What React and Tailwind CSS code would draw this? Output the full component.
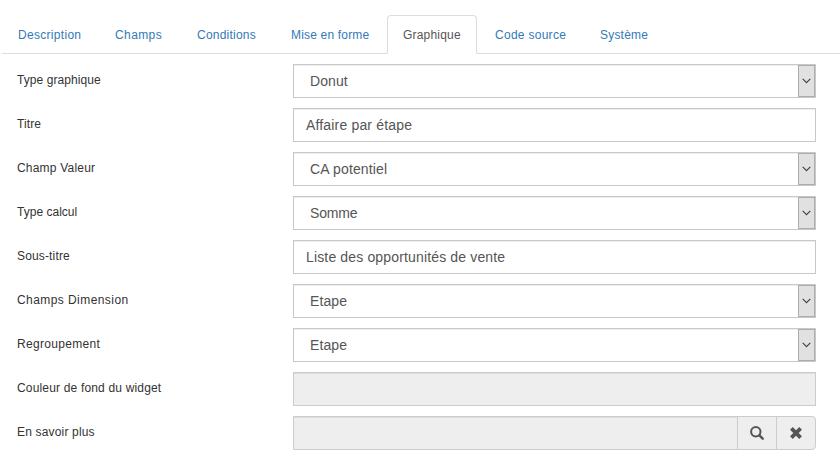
const tabs = [
  ['Description', 'w-[97px] tracking-[0.3px]'],
  ['Champs', 'w-[82px] tracking-[0.4px]'],
  ['Conditions', 'w-[94px] tracking-[0.22px]'],
  ['Mise en forme', 'w-[112px] tracking-[0.18px]'],
  ['Graphique', 'mr-[2px] w-[90px] tracking-[0.2px]'],
  ['Code source', 'w-[105px] tracking-[0.28px]'],
  ['Système', 'w-[82px] tracking-[0.2px]'],
];

const fields = [
  { label: 'Type graphique', spacing: 'tracking-[0.07px]', type: 'select', value: 'Donut', valueSpacing: 'tracking-[0.1px]' },
  { label: 'Titre', spacing: 'tracking-[0.1px]', type: 'text', value: 'Affaire par étape', valueSpacing: 'tracking-[0.17px]' },
  { label: 'Champ Valeur', spacing: 'tracking-[0.2px]', type: 'select', value: 'CA potentiel', valueSpacing: 'tracking-[0.15px]' },
  { label: 'Type calcul', spacing: 'tracking-[0.02px]', type: 'select', value: 'Somme', valueSpacing: 'tracking-[-0.2px]' },
  { label: 'Sous-titre', spacing: 'tracking-[0.15px]', type: 'text', value: 'Liste des opportunités de vente', valueSpacing: 'tracking-[0.15px]' },
  { label: 'Champs Dimension', spacing: 'tracking-[0.43px]', type: 'select', value: 'Etape', valueSpacing: 'tracking-[0.1px]' },
  { label: 'Regroupement', spacing: 'tracking-[0.32px]', type: 'select', value: 'Etape', valueSpacing: 'tracking-[0.1px]' },
  { label: 'Couleur de fond du widget', spacing: 'tracking-[0.17px]', type: 'disabled' },
  { label: 'En savoir plus', spacing: 'tracking-[0.17px]', type: 'lookup' },
];

function Select({ value, spacing }) {
  return (
    <div className="flex h-[34px] w-[523px] border border-[#c8c8c8] bg-white pl-4 text-[14px] leading-[32px] text-[#555] shadow-[inset_0_1px_1px_rgba(0,0,0,0.075)]">
      <span className={`grow ${spacing}`}>{value}</span>
      <span className="flex w-[17px] items-center justify-center border border-[#adadad] bg-[#e1e1e1]">
        <svg width="9" height="6" viewBox="0 0 9 6" fill="none" stroke="#444" strokeWidth="1.2">
          <path d="M0.7 0.9 4.5 4.7 8.3 0.9" />
        </svg>
      </span>
    </div>
  );
}

function Lookup() {
  return (
    <div className="flex h-[34px] w-[523px] rounded-r border border-[#ccc] bg-[#eee]">
      <span className="grow shadow-[inset_0_1px_1px_rgba(0,0,0,0.075)]" />
      <span className="flex w-[39px] items-center justify-center border-l border-[#ccc]">
        <svg width="14" height="14" viewBox="0 0 14 14" fill="none" stroke="#555" strokeWidth="2">
          <circle cx="5.8" cy="5.7" r="4.7" />
          <path d="M9.4 9.4 12.7 12.7" strokeWidth="2.4" strokeLinecap="round" />
        </svg>
      </span>
      <span className="flex w-[39px] items-center justify-center border-l border-[#ccc]">
        <svg width="12" height="12" viewBox="0 0 12 12" stroke="#555" strokeWidth="3.8">
          <path d="M1.4 1.4 10.6 10.6M10.6 1.4 1.4 10.6" />
        </svg>
      </span>
    </div>
  );
}

function Control({ field }) {
  if (field.type === 'select') return <Select value={field.value} spacing={field.valueSpacing} />;
  if (field.type === 'lookup') return <Lookup />;
  if (field.type === 'disabled') {
    return <div className="h-[34px] w-[523px] border border-[#ccc] bg-[#eee] shadow-[inset_0_1px_1px_rgba(0,0,0,0.075)]" />;
  }
  return (
    <div
      className={`h-[34px] w-[523px] border border-[#c8c8c8] bg-white pl-3 text-[14px] leading-[32px] text-[#555] shadow-[inset_0_1px_1px_rgba(0,0,0,0.075)] ${field.valueSpacing}`}
    >
      {field.value}
    </div>
  );
}

export default function App() {
  return (
    <div className="h-[465px] w-[840px] overflow-hidden bg-white pt-[15px] font-['Liberation_Sans',Arial,sans-serif] text-[12px] text-[#333]">
      <nav className="ml-0.5 flex h-[39px] border-b border-[#ddd]">
        {tabs.map(([name, style]) => (
          <a
            key={name}
            className={`${style} h-[39px] shrink-0 whitespace-nowrap rounded-t border pl-[15px] leading-[38px] ${
              name === 'Graphique' ? 'border-[#ddd] border-b-white bg-white text-[#555]' : 'border-transparent text-[#337ab7]'
            }`}
          >
            {name}
          </a>
        ))}
      </nav>
      <form className="flex flex-col gap-[10px] pl-[17px] pt-[10px]">
        {fields.map((field) => (
          <div key={field.label} className="flex h-[34px]">
            <label className={`w-[276px] leading-[33px] ${field.spacing}`}>{field.label}</label>
            <Control field={field} />
          </div>
        ))}
      </form>
    </div>
  );
}
